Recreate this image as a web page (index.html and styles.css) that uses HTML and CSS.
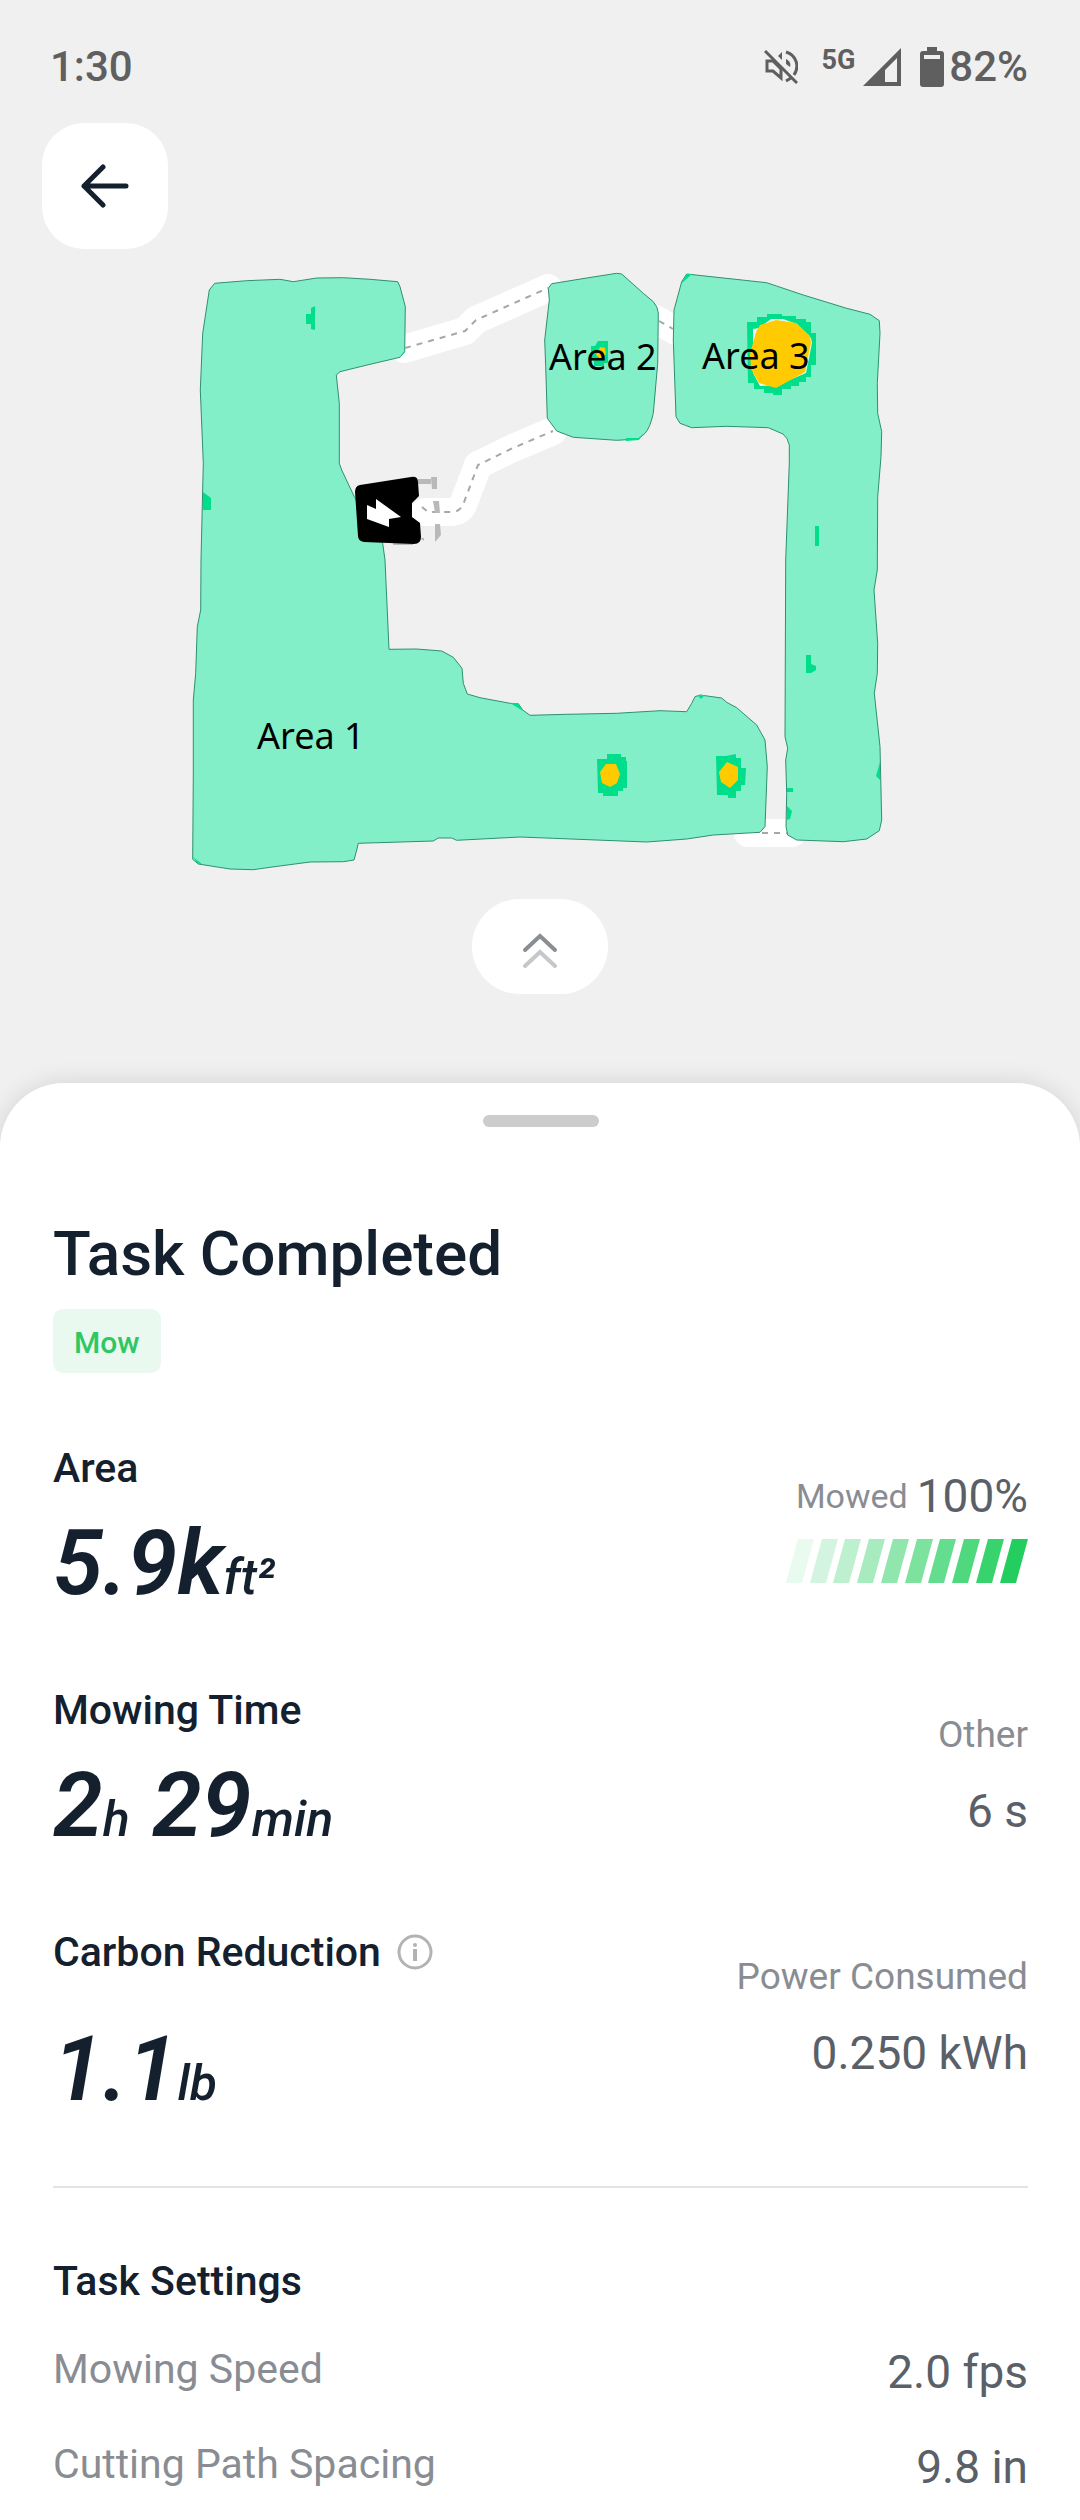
FILE: index.html
```html
<!DOCTYPE html>
<html lang="en">
<head>
    <meta charset="UTF-8">
    <meta name="viewport" content="width=device-width, initial-scale=1.0">
    <title>Task Completed</title>
    <link rel="stylesheet" href="styles.css">
</head>
<body>
    <div class="screen">
        <header class="status-bar">
            <span class="clock">1:30</span>
            <div class="status-icons">
                <svg class="icon-mute" viewBox="0 0 34 34" fill="none" stroke="#5f5f5f" stroke-width="3">
                    <path d="M1 1l32 32"/>
                    <path d="M9 11H3v10h6l8 7V19L9 11z"/>
                    <path d="M14 6l4-4v8z" fill="#5f5f5f" stroke="none"/>
                    <path d="M22 2c10 3 14 14 8 23M22 31l5-3"/>
                    <path d="M22 9c4 2 5 5 4 8l-4-3z" fill="#5f5f5f" stroke="none"/>
                </svg>
                <span class="network">5G</span>
                <svg class="icon-signal" viewBox="0 0 38 38">
                    <path fill="#5f5f5f" fill-rule="evenodd" d="M38 0v38H0zM34 10L22 22v12h12z"/>
                </svg>
                <svg class="icon-battery" viewBox="0 0 24 40">
                    <path fill="#5f5f5f" fill-rule="evenodd" d="M7 0h10v4h4q3 0 3 3v30q0 3-3 3H3q-3 0-3-3V7q0-3 3-3h4zM4 8v4h16V8z"/>
                </svg>
                <span class="battery-level">82%</span>
            </div>
        </header>

        <nav class="top-nav">
            <button class="back-btn" type="button" aria-label="Back">
                <svg viewBox="0 0 48 44" fill="none" stroke="#14202e" stroke-width="5" stroke-linecap="round" stroke-linejoin="round">
                    <path d="M22 3L3 22l19 19M3 22h42"/>
                </svg>
            </button>
        </nav>

        <main class="map">
            <svg class="map-drawing" viewBox="170 249 740 631" role="img" aria-label="Mowing map">
                <!-- channels between the areas -->
                <g class="channel">
                    <path d="M404 349L465 331L476 320L548 288"/>
                    <path d="M425 512H453Q460 511 463 505L478 465L513 448L553 431"/>
                    <path d="M655 319L676 331"/>
                    <path d="M748 833H792"/>
                </g>

                <!-- area 1 -->
                <path class="area" d="M214.7 283.3L246.7 280.7L280 279.3L293.3 281.7L316.7 278L343.3 277.7L370 279.3L397.7 281.7L400 286.7L405.3 306.7L404.7 351.7L400 357.3L370 364.3L340 371.7L336.3 375L339.3 403.3V463.3L341.7 470L354.3 496.7L382.7 543.3L385 560L389 649.3L416.7 649L441.7 651L453.3 657.3L462 668.3L463.3 683.3L467.3 694L480 697.7L510 703.3L518.3 703.7L522.7 710L530 715.3L566.7 714.3L616.7 713.3L660 710.7L686.7 711.7L691.7 703.3L695 696.7L700 695L721.7 698L726.7 702.3L736.7 707.7L756.7 725L765 740L767.3 766.7L765 826.7L760 832.3L713.3 835L686.7 839L646.7 842L553.3 838.3L520 837L456.7 840.3L451.7 838H438.3L433.3 841L358.3 843.3L356.7 850L354 860L343.3 861.7L310 862L270 867.3L253.3 869.7L230 869L198.3 864L192.7 859.3L193.3 773.3V700L195.7 673.3L197.3 626.7L200.7 610L201 560L203.3 463.3L200.3 390L202.7 333.3L209.3 290z"/>
                <!-- area 2 -->
                <path class="area" d="M551.7 283.7L586.7 278L616.7 273.3L621.7 274L643.3 293.3L653.3 301.7Q658 307 658.3 313L657.7 363.3L653.3 413.3Q650 428 645 433.3L638.3 439L616.7 440.3L573.3 437.3L556.7 431L547.3 418.3L545.7 366.7L544.7 340L549.3 300L548.3 288.3z"/>
                <!-- area 3 -->
                <path class="area" d="M681.7 281.7L686.7 274L766.7 282.7L803.3 295L846.7 308.3L870 314.3L879.3 320.7L880 333.3L877.3 383.3L877.7 413.3L881.7 431.7L881 456.7L877.7 496.7L877.3 570L874 590L877.7 643.3L877.3 673.3L874.3 693.3L880 746.7L881.7 820L879.3 830.7L866.7 839L843.3 841.7L796.7 840L787.7 835L786 826.7L786.7 793.3L785.7 760L787.7 748.3L785 736.7L785.7 560L789.3 463.3V445Q788 438 783 434L768.3 427.7L726.7 426.3L691.7 427.7L680 423.3L676 416.7L673.3 340L674 310z"/>

                <g class="channel-line">
                    <path d="M405 348L465 331L476 320L548 288"/>
                    <path d="M422 507L428 512H453Q460 511 463 505L478 465L513 448L553 431"/>
                    <path d="M659 321L673 329"/>
                    <path d="M762 833H787"/>
                </g>

                <!-- missed patches -->
                <g class="patch">
                    <path d="M315 306l-4 2v6h-5v10h5v5l4 1z"/>
                    <path d="M203 492l8 6v12h-8z"/>
                    <path d="M815 526h4v20h-4zM806 655h5v9l5 2v4l-5 3h-5z"/>
                    <path d="M787 788h6v4h-6zM787 806l5 5-2 8-3 1zM880 762l-4 14 4 4z"/>
                    <path d="M193 857l9 7h-4zM400 357l5-5v-2zM510 703h8l5 8zM697 695h8l-4 4zM681 284l6-10h5zM626 438h13l4-4-4 6-13 1z"/>
                    <path d="M598 341h10v22h-4v3h-10v-6h-3v-14h4z"/>
                    <path d="M747 322h10v-5h10v-3h15v2h14v3h10v3h5v11h5v32h-5v12h-5v5h-7v4h-8v3h-9v6h-9v-2h-9v-4h-10v-6h-6z"/>
                    <path d="M597 759h10v-5h14v3h5v4h1v27h-4v3h-5v5h-15v-3h-5z"/>
                    <path d="M716 756h10l10-2v4h5v10h5l-1 17h-4v6h-5v7h-8v-3h-11z"/>
                </g>
                <path d="M753 329l6-1 12-9h12l14 5 14 14 1 5-6 30-28 12-18 1-7-13z" fill="#e8fbf7"/>
                <g class="obstacle">
                    <path d="M760 325l16-5 20 3 14 13 1 7-6 29-29 16-17-5-8-14-1-15 6-22z"/>
                    <path d="M600 347l5 1 1 6-5 5-5-4z"/>
                    <path d="M606 764h10l4 10-3 9-7 4-8-4-2-11z"/>
                    <path d="M727 762l11 5v13l-8 8-9-6-2-10z"/>
                </g>

                <!-- charging dock -->
                <g fill="#b9b9b9">
                    <path d="M418 479h13v5h-13zM431 477h6v12h-5zM433 501h6l1 12h-5zM435 524h5l1 11-6 7zM393 543h20v2h-20zM420 538l4 3v-3z"/>
                </g>
                <path d="M360 485L411 477Q418 476 418 482L419 496L412 503V517L420 523L421 537Q421 544 414 544L364 542Q358 541 358 536L355 492Q355 486 360 485z"/>
                <path fill="#fff" d="M367 505l9 4v-10l25 18-12 2v8l-22-8z"/>

                <g class="area-name">
                    <text x="257" y="749">Area 1</text>
                    <text x="549" y="370">Area 2</text>
                    <text x="702" y="369">Area 3</text>
                </g>
            </svg>
            <button class="expand-btn" type="button" aria-label="Expand map">
                <svg viewBox="0 0 36 36" fill="none" stroke-width="4" stroke-linecap="round" stroke-linejoin="miter">
                    <path stroke="#898e94" d="M3 17L18 3l15 14"/>
                    <path stroke="#c5c7ca" d="M3 33l15-14 15 14"/>
                </svg>
            </button>
        </main>

        <section class="sheet">
            <div class="handle"></div>
            <h1>Task Completed</h1>
            <span class="badge">Mow</span>

            <div class="stats">
                <div class="stat">
                    <div class="stat-main">
                        <h2>Area</h2>
                        <p class="value">5.9k<span class="unit">ft²</span></p>
                    </div>
                    <div class="stat-side stat-progress">
                        <p class="mowed"><span class="mowed-label">Mowed</span><span class="side-value">100%</span></p>
                        <svg class="bars" viewBox="0 0 242 44" fill="#24ce5e">
                            <path opacity=".1" d="M12 0h16L16 44H0z"/>
                            <path opacity=".2" d="M36 0h16L40 44H24z"/>
                            <path opacity=".3" d="M59 0h16L63 44H47z"/>
                            <path opacity=".4" d="M83 0h16L87 44H71z"/>
                            <path opacity=".5" d="M107 0h16l-12 44H95z"/>
                            <path opacity=".6" d="M131 0h16l-12 44h-16z"/>
                            <path opacity=".7" d="M154 0h16l-12 44h-16z"/>
                            <path opacity=".8" d="M178 0h16l-12 44h-16z"/>
                            <path opacity=".9" d="M202 0h16l-12 44h-16z"/>
                            <path d="M226 0h16l-12 44h-16z"/>
                        </svg>
                    </div>
                </div>

                <div class="stat">
                    <div class="stat-main">
                        <h2>Mowing Time</h2>
                        <p class="value">2<span class="unit">h</span> 29<span class="unit">min</span></p>
                    </div>
                    <div class="stat-side">
                        <p class="side-label">Other</p>
                        <p class="side-value">6 s</p>
                    </div>
                </div>

                <div class="stat">
                    <div class="stat-main stat-carbon">
                        <div class="label-row">
                            <h2>Carbon Reduction</h2>
                            <button class="info-btn" type="button" aria-label="About carbon reduction">
                                <svg viewBox="0 0 36 36">
                                    <circle cx="18" cy="18" r="16" fill="none" stroke="#b3b3b3" stroke-width="3"/>
                                    <circle cx="18" cy="11" r="2" fill="#b3b3b3"/>
                                    <path d="M18 15v12" stroke="#b3b3b3" stroke-width="4"/>
                                </svg>
                            </button>
                        </div>
                        <p class="value">1.1<span class="unit">lb</span></p>
                    </div>
                    <div class="stat-side">
                        <p class="side-label">Power Consumed</p>
                        <p class="side-value">0.250 kWh</p>
                    </div>
                </div>
            </div>

            <div class="settings">
                <h2>Task Settings</h2>
                <dl>
                    <div class="setting">
                        <dt>Mowing Speed</dt>
                        <dd>2.0 fps</dd>
                    </div>
                    <div class="setting">
                        <dt>Cutting Path Spacing</dt>
                        <dd>9.8 in</dd>
                    </div>
                </dl>
            </div>
        </section>
    </div>
</body>
</html>
```

FILE: styles.css
```css
* {
    margin: 0;
    padding: 0;
    box-sizing: border-box;
}

body {
    font-family: Roboto, sans-serif;
    background: #f0f0f0;
    color: #14202e;
}

button {
    border: none;
    background: #fff;
    cursor: pointer;
}

svg {
    display: block;
}

.screen {
    min-height: 100vh;
    display: flex;
    flex-direction: column;
}

/* Status bar */
.status-bar {
    display: flex;
    justify-content: space-between;
    align-items: center;
    padding: 42px 52px 31px 50px;
    font-size: 42px;
    font-weight: 500;
    line-height: 50px;
    color: #5f5f5f;
}

.status-icons {
    display: flex;
    align-items: center;
}

.icon-mute {
    width: 34px;
    height: 34px;
    margin-right: 23px;
}

.network {
    align-self: flex-start;
    font-size: 27px;
    line-height: 36px;
    font-weight: 700;
    margin-right: 8px;
}

.icon-signal {
    width: 38px;
    height: 38px;
    margin-right: 19px;
}

.icon-battery {
    width: 24px;
    height: 40px;
    margin-right: 5px;
}

.top-nav {
    padding: 0 42px;
}

.back-btn {
    width: 126px;
    height: 126px;
    border-radius: 42px;
    display: flex;
    align-items: center;
    justify-content: center;
}

.back-btn svg {
    width: 48px;
    height: 44px;
}

/* Map */
.map {
    display: flex;
    flex-direction: column;
    align-items: center;
    padding-bottom: 89px;
}

.map-drawing {
    width: 740px;
    max-width: 100%;
    margin-bottom: 19px;
}

.channel {
    fill: none;
    stroke: #fff;
    stroke-width: 28;
    stroke-linecap: round;
    stroke-linejoin: round;
}

.channel-line {
    fill: none;
    stroke: #a3a8ab;
    stroke-width: 2;
    stroke-dasharray: 6 6;
}

.area {
    fill: #82efc8;
    stroke: #2f8f72;
    stroke-width: 1;
    stroke-linejoin: round;
}

.patch {
    fill: #00de8b;
}

.obstacle {
    fill: #ffcb00;
}

.area-name {
    font-family: "Noto Sans", sans-serif;
    font-size: 36px;
    fill: #000;
}

.expand-btn {
    width: 136px;
    height: 95px;
    border-radius: 48px;
    display: flex;
    align-items: center;
    justify-content: center;
}

.expand-btn svg {
    width: 36px;
    height: 36px;
    margin-top: 8px;
}

/* Bottom sheet */
.sheet {
    flex: 1;
    background: #fff;
    border-radius: 64px 64px 0 0;
    box-shadow: 0 0 24px rgba(0, 0, 0, 0.12);
    padding: 32px 52px 24px 53px;
}

.handle {
    width: 116px;
    height: 12px;
    border-radius: 6px;
    background: #ccc;
    margin: 0 auto 89px;
}

h1 {
    font-size: 62px;
    font-weight: 500;
    line-height: 76px;
    margin-bottom: 17px;
}

h2 {
    font-size: 41px;
    font-weight: 500;
    line-height: 50px;
}

.badge {
    display: block;
    width: fit-content;
    padding: 4px 21px 0;
    border-radius: 10px;
    background: #e9f9ef;
    color: #2dc763;
    font-size: 30px;
    font-weight: 500;
    line-height: 60px;
}

.stats {
    display: flex;
    flex-direction: column;
    gap: 71px;
    margin-top: 70px;
    padding-bottom: 66px;
    border-bottom: 2px solid #e3e4e6;
}

.stat {
    display: flex;
    justify-content: space-between;
}

.stat-main {
    display: flex;
    flex-direction: column;
    gap: 21px;
}

.stat-carbon {
    gap: 43px;
}

.value {
    font-size: 90px;
    font-weight: 600;
    font-style: italic;
    line-height: 100px;
}

.unit {
    font-size: 50px;
    font-weight: 500;
    line-height: 1;
}

.label-row {
    display: flex;
    align-items: center;
    gap: 16px;
}

.info-btn {
    width: 36px;
    height: 36px;
}

.stat-side {
    display: flex;
    flex-direction: column;
    align-items: flex-end;
    gap: 26px;
    padding-top: 28px;
}

.stat-progress {
    gap: 15px;
    padding-top: 25px;
}

.mowed {
    display: flex;
    align-items: center;
    gap: 9px;
}

.mowed-label {
    font-size: 34px;
    color: #898d93;
}

.side-label {
    font-size: 37px;
    line-height: 44px;
    color: #898d93;
}

.side-value {
    font-size: 46px;
    line-height: 56px;
    color: #5a6068;
}

.bars {
    width: 242px;
    height: 44px;
}

/* Task settings */
.settings {
    padding-top: 68px;
}

.settings dl {
    display: flex;
    flex-direction: column;
    gap: 39px;
    margin-top: 38px;
}

.setting {
    display: flex;
    justify-content: space-between;
}

.setting dt {
    font-size: 41px;
    line-height: 50px;
    color: #898d93;
}

.setting dd {
    font-size: 46px;
    line-height: 56px;
    color: #5a6068;
}
```
